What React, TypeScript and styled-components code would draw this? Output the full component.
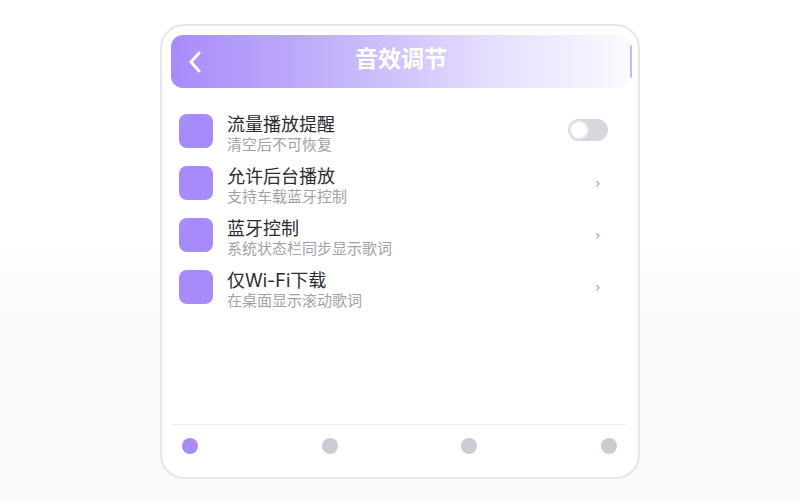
import React, { useState } from "react";
import styled, { createGlobalStyle } from "styled-components";

const GlobalStyle = createGlobalStyle`
  html, body {
    margin: 0;
    padding: 0;
  }
  body {
    height: 500px;
    background: linear-gradient(to bottom, #ffffff 0%, #ffffff 48%, #fafafb 62%, #fafafb 100%);
    font-family: Inter, "Noto Sans CJK SC", sans-serif;
  }
`;

const Page = styled.div`
  display: flex;
  justify-content: center;
  padding-top: 24px;
`;

const Phone = styled.div`
  box-sizing: border-box;
  width: 480px;
  height: 455px;
  border: 2px solid #e6e6ec;
  border-radius: 24px;
  background: #fff;
  display: flex;
  flex-direction: column;
  padding: 9px 9px 0 9px;
`;

const Header = styled.div`
  height: 53px;
  border-radius: 12px;
  background: linear-gradient(to right, #a88bfa 0%, #c7b8fb 40%, #e6defd 70%, #fbfaff 100%);
  display: flex;
  align-items: center;
  padding: 0 10px 0 17px;
  margin-right: -2px;
`;

const BackButton = styled.div`
  width: 24px;
  height: 24px;
  display: flex;
  align-items: center;
`;

const Title = styled.div`
  flex: 1;
  text-align: center;
  color: #fff;
  font-size: 23px;
  line-height: 28px;
  font-weight: 700;
  margin-right: 40px;
  padding-bottom: 5px;
`;

const EdgeLine = styled.div`
  width: 2px;
  height: 33px;
  background: #c7b6fc;
  border-radius: 1px;
  margin-right: -11px;
`;

const List = styled.ul`
  list-style: none;
  margin: 0;
  padding: 26px 20px 0 8px;
  flex: 1;
`;

const Row = styled.li`
  height: 52px;
  display: flex;
  align-items: flex-start;
`;

const RowIcon = styled.div`
  width: 34px;
  height: 34px;
  border-radius: 8px;
  background: #a78bfa;
  flex-shrink: 0;
`;

const RowText = styled.div`
  flex: 1;
  margin-left: 14px;
  display: flex;
  flex-direction: column;
`;

const RowTitle = styled.div`
  font-size: 18px;
  line-height: 22px;
  color: #2b2b33;
`;

const RowSub = styled.div`
  font-size: 15px;
  line-height: 17px;
  color: #a0a2aa;
`;

const Toggle = styled.div<{ $on: boolean }>`
  box-sizing: border-box;
  width: 40px;
  height: 22px;
  border-radius: 11px;
  background: ${(p) => (p.$on ? "#a78bfa" : "#d6d8de")};
  margin-top: 5px;
  margin-right: 1px;
  position: relative;
  cursor: pointer;

  &::after {
    content: "";
    position: absolute;
    top: 1px;
    left: ${(p) => (p.$on ? "19px" : "1px")};
    width: 20px;
    height: 20px;
    box-sizing: border-box;
    border: 2px solid #e4e5ea;
    border-radius: 50%;
    background: #fff;
  }
`;

const Chevron = styled.div`
  width: 12px;
  margin-top: 10px;
  margin-right: 2px;
  color: #9ca3af;
  font-size: 14px;
  line-height: 14px;
  font-family: "DejaVu Sans", sans-serif;
`;

const Footer = styled.div`
  box-sizing: border-box;
  border-top: 1px solid #eeeef2;
  margin: 0 2px 0 1px;
  height: 53px;
  display: flex;
  justify-content: space-between;
  align-items: flex-start;
  padding: 13px 10px 0 10px;
`;

const Dot = styled.div<{ $active: boolean }>`
  width: 16px;
  height: 16px;
  border-radius: 50%;
  background: ${(p) => (p.$active ? "#a78bfa" : "#c9ccd3")};
`;

const items = [
  { title: "流量播放提醒", sub: "清空后不可恢复", toggle: true },
  { title: "允许后台播放", sub: "支持车载蓝牙控制", toggle: false },
  { title: "蓝牙控制", sub: "系统状态栏同步显示歌词", toggle: false },
  { title: "仅Wi-Fi下载", sub: "在桌面显示滚动歌词", toggle: false },
];

const App: React.FC = () => {
  const [on, setOn] = useState(false);
  const [page, setPage] = useState(0);

  return (
    <>
      <GlobalStyle />
      <Page>
        <Phone>
          <Header>
            <BackButton>
              <svg width="14" height="22" viewBox="0 0 14 22" fill="none">
                <path d="M11 2 L3 11 L11 20" stroke="#fff" strokeWidth="3" strokeLinecap="round" strokeLinejoin="round" />
              </svg>
            </BackButton>
            <Title>音效调节</Title>
            <EdgeLine />
          </Header>
          <List>
            {items.map((item) => (
              <Row key={item.title}>
                <RowIcon />
                <RowText>
                  <RowTitle>{item.title}</RowTitle>
                  <RowSub>{item.sub}</RowSub>
                </RowText>
                {item.toggle ? (
                  <Toggle $on={on} onClick={() => setOn(!on)} />
                ) : (
                  <Chevron>›</Chevron>
                )}
              </Row>
            ))}
          </List>
          <Footer>
            {[0, 1, 2, 3].map((i) => (
              <Dot key={i} $active={i === page} onClick={() => setPage(i)} />
            ))}
          </Footer>
        </Phone>
      </Page>
    </>
  );
};

export default App;
